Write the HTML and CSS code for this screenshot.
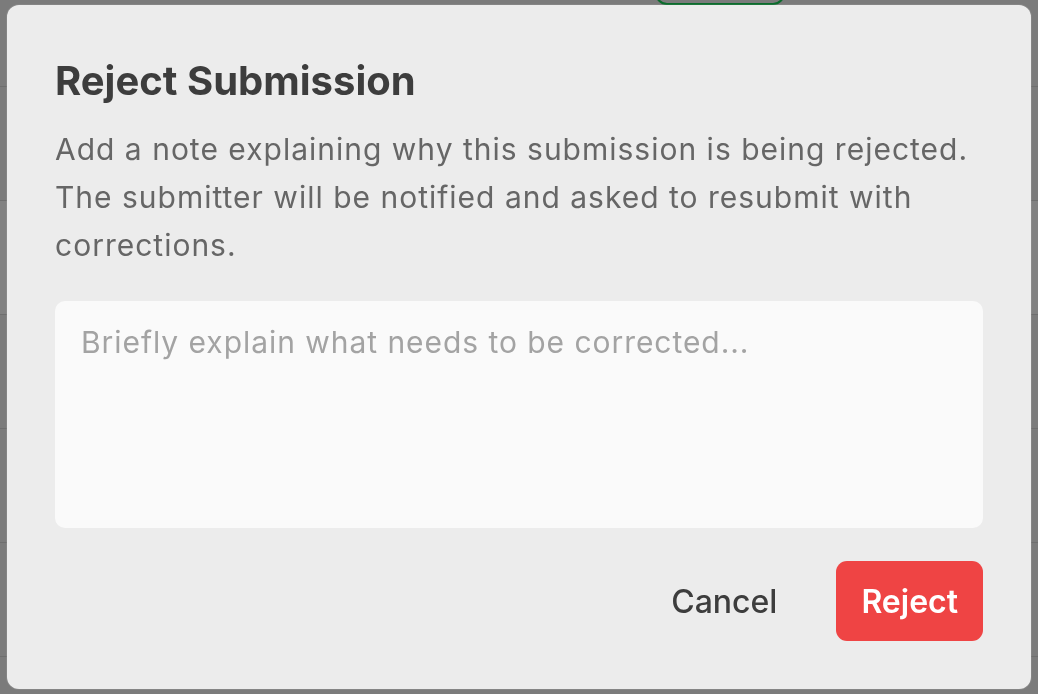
FILE: index.html
```html
<!DOCTYPE html>
<html lang="en">
<head>
<meta charset="utf-8">
<title>Reject Submission</title>
<link rel="stylesheet" href="styles.css">
</head>
<body>
<div class="page">
  <div class="rows">
    <div class="row"><span class="status status-green"></span></div>
    <div class="row"></div>
    <div class="row row-hl"></div>
    <div class="row"></div>
    <div class="row"></div>
    <div class="row"><span class="status status-red"></span></div>
  </div>
</div>
<div class="overlay">
  <div class="modal" role="dialog" aria-labelledby="modal-title">
    <h2 class="modal-title" id="modal-title">Reject Submission</h2>
    <p class="modal-text">Add a note explaining why this submission is being rejected. The submitter will be notified and asked to resubmit with corrections.</p>
    <textarea class="modal-note" placeholder="Briefly explain what needs to be corrected..."></textarea>
    <div class="modal-actions">
      <button class="btn btn-ghost" type="button">Cancel</button>
      <button class="btn btn-danger" type="button">Reject</button>
    </div>
  </div>
</div>
</body>
</html>
```

FILE: styles.css
```css
* { box-sizing: border-box; }

html, body {
  margin: 0;
  padding: 0;
  width: 1038px;
  height: 694px;
  overflow: hidden;
  font-family: Inter, "Noto Sans", "Liberation Sans", sans-serif;
  font-optical-sizing: none;
}

body { background: #7b7b7b; }

.page {
  width: 1038px;
  height: 694px;
  overflow: hidden;
  background: #7b7b7b;
}

.rows {
  display: flex;
  flex-direction: column;
}

.row {
  height: 114px;
  flex: none;
  border-bottom: 1px solid #6e6e6e;
  display: flex;
  align-items: flex-start;
  padding-left: 649px;
}

.row:first-child { height: 87px; }
.row-hl { background: #818181; }

.status {
  display: block;
  width: 130px;
  height: 40px;
  border-radius: 12px;
}

.status-green {
  margin-top: -35px;
  border: 2px solid #0b6b2c;
  margin-left: 6px;
}

.status-red {
  margin-top: 31px;
  width: 140px;
  border: 2px solid #7a1c1c;
}

.overlay {
  position: fixed;
  inset: 0;
  display: flex;
  align-items: center;
  justify-content: center;
}

.modal {
  width: 1024px;
  background: #ececec;
  border-radius: 12px;
  padding: 48px;
  box-shadow: 0 0 0 1px rgba(255,255,255,0.08);
  display: flex;
  flex-direction: column;
}

.modal-title {
  margin: 0;
  font-size: 40px;
  line-height: 56px;
  font-weight: 700;
  color: #3d3d3d;
}

.modal-text {
  margin: 16px 0 0;
  font-size: 30px;
  line-height: 48px;
  letter-spacing: 1px;
  color: #666666;
}

.modal-note {
  margin-top: 32px;
  height: 227px;
  width: 100%;
  resize: none;
  border: none;
  outline: none;
  border-radius: 10px;
  background: #fafafa;
  padding: 17px 26px;
  font-family: inherit;
  font-optical-sizing: none;
  font-size: 30px;
  line-height: 48px;
  letter-spacing: 0.95px;
  color: #333333;
}

.modal-note::placeholder { color: #a3a3a3; }

.modal-actions {
  margin-top: 33px;
  display: flex;
  justify-content: flex-end;
  gap: 33px;
}

.btn {
  height: 80px;
  padding: 0 26px;
  border: none;
  border-radius: 11px;
  font-family: inherit;
  font-optical-sizing: none;
  font-size: 32px;
  cursor: pointer;
}

.btn-ghost {
  background: transparent;
  color: #3d3d3d;
  font-weight: 500;
}

.btn-danger {
  padding: 0 25px;
  background: #ef4444;
  color: #ffffff;
  font-weight: 600;
}
```
